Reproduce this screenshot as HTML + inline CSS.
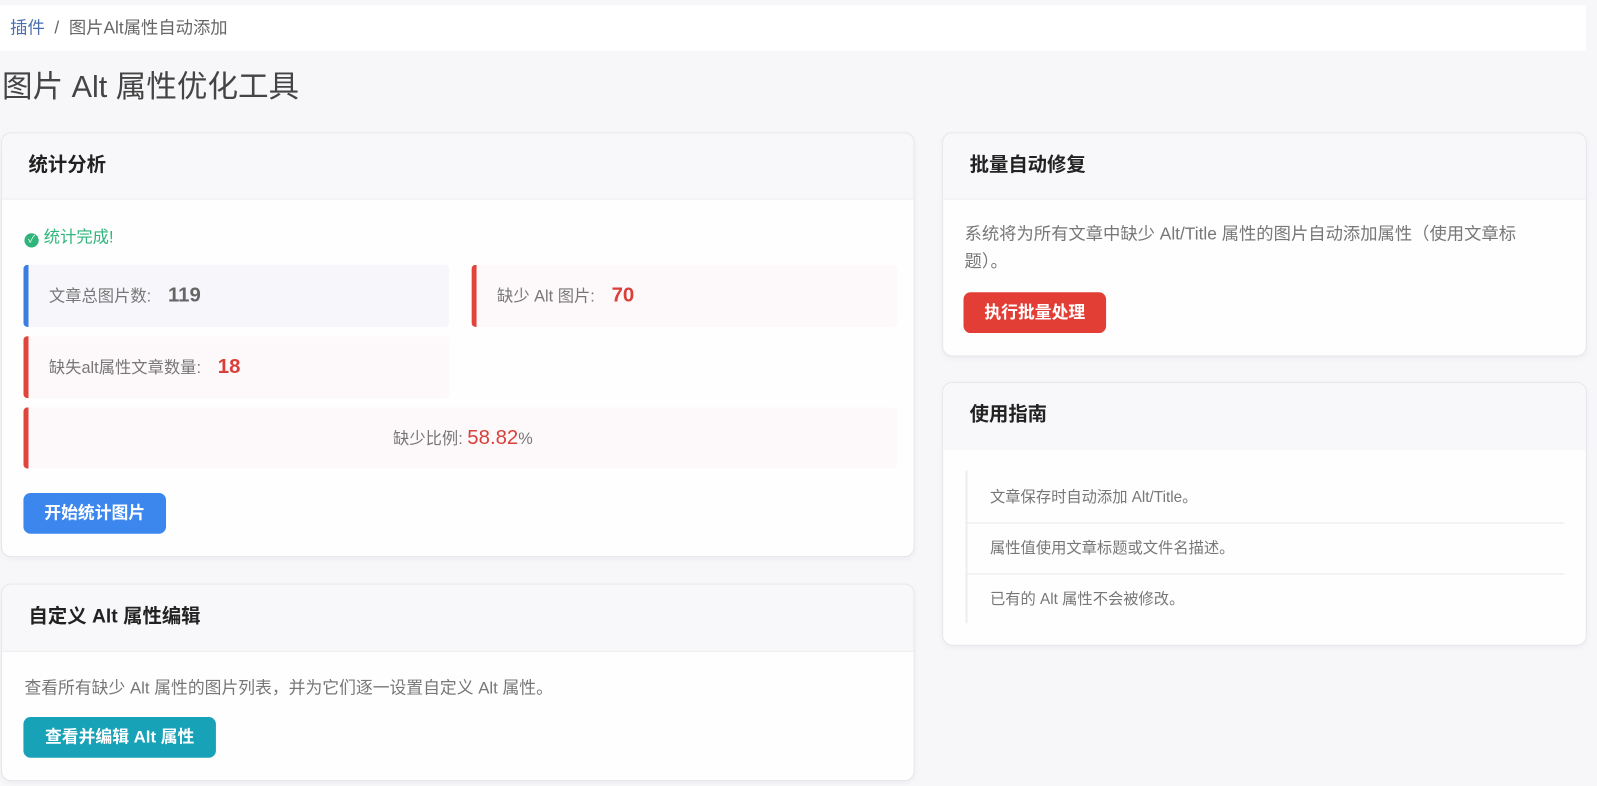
<!DOCTYPE html>
<html><head><meta charset="utf-8"><style>
*{box-sizing:border-box;margin:0;padding:0}
body{width:1597px;height:786px;background:#f7f7fa;font-family:"Liberation Sans","Noto Sans CJK SC",sans-serif;color:#555;position:relative;overflow:hidden}
#w{position:absolute;left:0;top:0;width:1568px;height:772px;transform:scale(1.0185);transform-origin:0 0}
.abs{position:absolute}
.bc{left:0;top:5px;width:1557px;height:45px;background:#fff;font-size:17px;line-height:45px;padding-left:10px;color:#666}
.bc a{color:#4a6fb0;text-decoration:none}
h1{position:absolute;left:2px;top:66px;font-size:30px;font-weight:normal;color:#444;line-height:40px}
.card{position:absolute;background:#fefefe;border:1px solid #e6e6ea;border-radius:10px;box-shadow:0 2px 6px rgba(0,0,0,.04);overflow:hidden}
.hd{height:65px;background:#f8f8fa;border-bottom:1px solid #eee;font-size:19px;font-weight:bold;color:#222;line-height:64px;padding-left:26px}
.stat{position:absolute;height:61px;border-left:5px solid #e0443a;border-radius:4px;background:#fdf9fb;font-size:16px;color:#777;line-height:61px;padding-left:20px}
.stat b{font-size:20px;margin-left:12px}
.btn{position:absolute;height:40px;border-radius:7px;color:#fff;font-weight:bold;font-size:16.5px;line-height:40px;text-align:center}
.li{position:absolute;left:22px;width:588px;height:50px;line-height:50px;padding-left:24px;font-size:15px;color:#777;border-bottom:1px solid #e8e8ec}
</style></head><body><div id="w">
<div class="abs bc"><a>插件</a>&nbsp; / &nbsp;图片Alt属性自动添加</div>
<h1>图片 Alt 属性优化工具</h1>

<div class="card" style="left:1px;top:130px;width:897px;height:417px">
<div class="hd">统计分析</div>
<div class="abs" style="left:22px;top:88px;font-size:16px;color:#2fb57b"><span style="display:inline-block;width:14px;height:14px;border-radius:50%;background:#2fb57b;color:#fff;font-size:10px;line-height:14px;text-align:center;vertical-align:0px;margin-right:5px">✓</span>统计完成!</div>
<div class="stat" style="left:21px;top:129px;width:418px;border-left-color:#3b7de0;background:#f7f7fb">文章总图片数: <b style="color:#666">119</b></div>
<div class="stat" style="left:461px;top:129px;width:418px">缺少 Alt 图片: <b style="color:#d9403a">70</b></div>
<div class="stat" style="left:21px;top:199px;width:418px">缺失alt属性文章数量: <b style="color:#d9403a">18</b></div>
<div class="stat" style="left:21px;top:269px;width:858px;height:60px;text-align:center;padding:0">缺少比例: <span style="color:#d9403a;font-size:20px">58.82</span>%</div>
<div class="btn" style="left:21px;top:353px;width:140px;background:#3b87ee">开始统计图片</div>
</div>

<div class="card" style="left:1px;top:573px;width:897px;height:194px">
<div class="hd" style="height:66px">自定义 Alt 属性编辑</div>
<div class="abs" style="left:22px;top:88px;font-size:16.5px;color:#777">查看所有缺少 Alt 属性的图片列表，并为它们逐一设置自定义 Alt 属性。</div>
<div class="btn" style="left:21px;top:130px;width:189px;background:#17a2b8">查看并编辑 Alt 属性</div>
</div>

<div class="card" style="left:925px;top:130px;width:633px;height:220px">
<div class="hd">批量自动修复</div>
<div class="abs" style="left:21px;top:85px;width:565px;font-size:17px;line-height:27px;color:#777">系统将为所有文章中缺少 Alt/Title 属性的图片自动添加属性（使用文章标题）。</div>
<div class="btn" style="left:20px;top:156px;width:140px;background:#e33e35">执行批量处理</div>
</div>

<div class="card" style="left:925px;top:375px;width:633px;height:259px">
<div class="hd" style="height:66px;border-bottom:none">使用指南</div>
<div class="abs" style="left:22px;top:86px;width:2px;height:150px;background:#eee"></div>
<div class="li" style="top:88px">文章保存时自动添加 Alt/Title。</div>
<div class="li" style="top:138px">属性值使用文章标题或文件名描述。</div>
<div class="li" style="top:188px;border-bottom:none">已有的 Alt 属性不会被修改。</div>
</div>
</div></body></html>
